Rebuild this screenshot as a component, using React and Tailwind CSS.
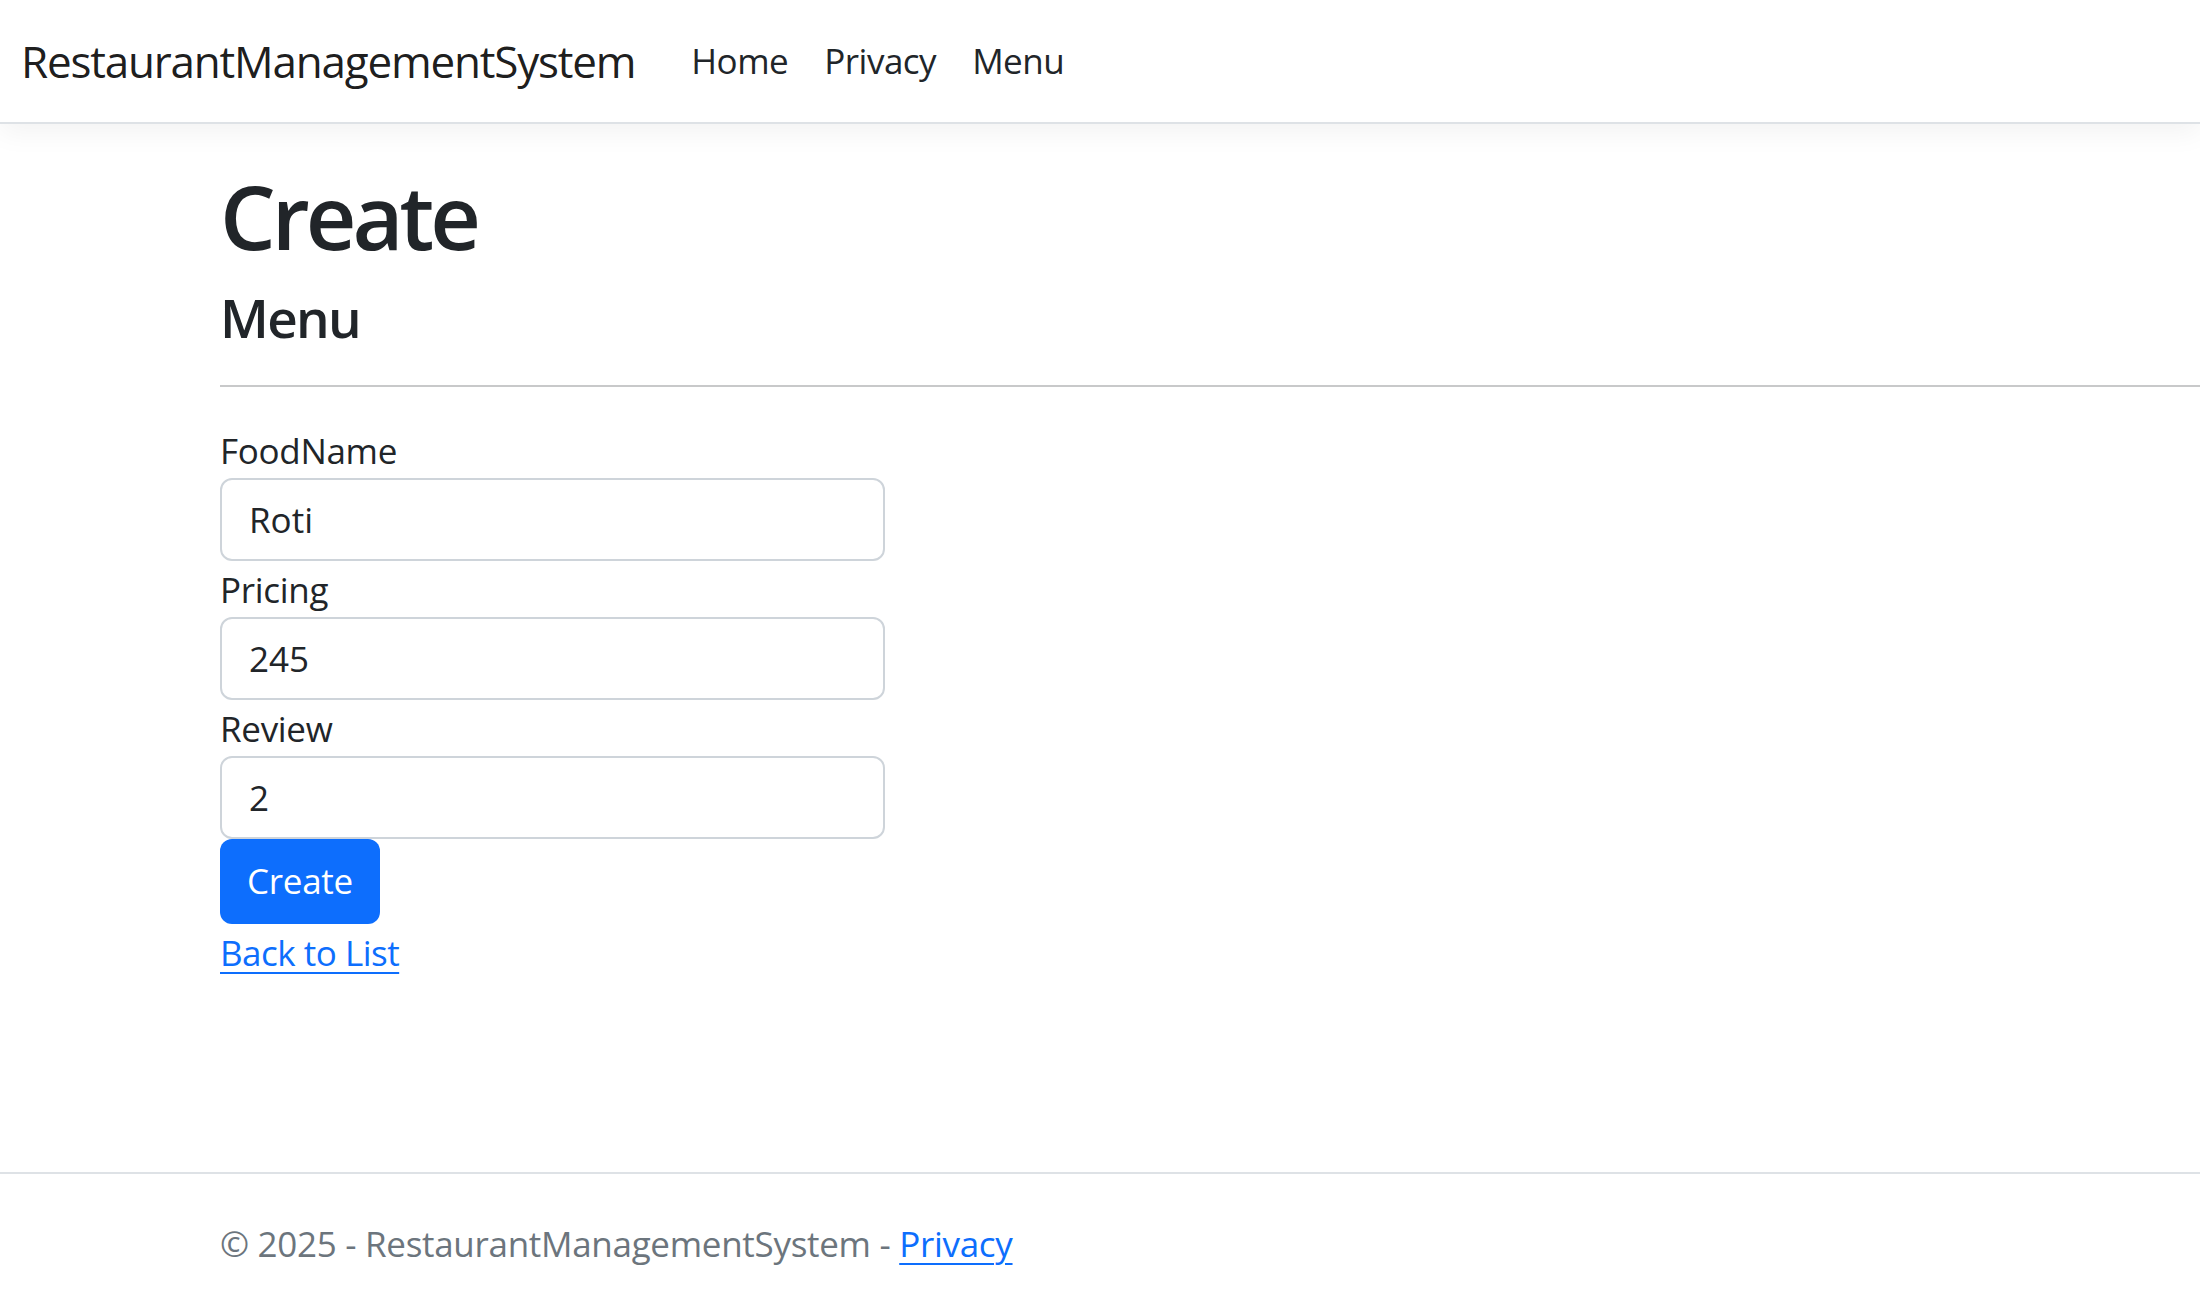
import React from 'react';

function Field({ label, value }) {
  return (
    <div className="mb-[2px]">
      <label className="block text-[35px] leading-[54px] tracking-[-0.3px] text-[#212529]">{label}</label>
      <input
        type="text"
        defaultValue={value}
        className="block w-[665px] h-[83px] px-[27px] text-[35px] text-[#212529] bg-white border-2 border-[#ced4da] rounded-[12px] outline-none"
      />
    </div>
  );
}

export default function App() {
  return (
    <div className="min-h-screen flex flex-col bg-white font-['Open_Sans',sans-serif]">
      {/* Navbar */}
      <header className="h-[124px] bg-white border-b-2 border-[#dee2e6] shadow-[0_9px_26px_rgba(0,0,0,0.05)] relative z-10">
        <nav className="h-full flex items-center pl-[21px]">
          <a href="#" className="text-[44px] tracking-[-1.2px] text-black/90 mr-[38px]">RestaurantManagementSystem</a>
          <ul className="flex">
            <li><a href="#" className="block px-[18px] text-[35px] tracking-[-0.5px] text-[#212529]">Home</a></li>
            <li><a href="#" className="block px-[18px] text-[35px] tracking-[-0.5px] text-[#212529]">Privacy</a></li>
            <li><a href="#" className="block px-[18px] text-[35px] tracking-[-0.5px] text-[#212529]">Menu</a></li>
          </ul>
        </nav>
      </header>

      {/* Page */}
      <main className="flex-1 pl-[220px]">
        <h1 className="mt-[40px] text-[88px] leading-[1.2] tracking-[-4px] font-semibold text-[#212529]">Create</h1>
        <h4 className="mt-[16px] text-[53px] leading-[1.2] tracking-[-1.7px] font-semibold text-[#212529]">Menu</h4>
        <hr className="mt-[36px] border-t-2 border-[#c8c9ca]" />

        <form className="mt-[37px]" onSubmit={(e) => e.preventDefault()}>
          <Field label="FoodName" value="Roti" />
          <Field label="Pricing" value="245" />
          <Field label="Review" value="2" />
          <button
            type="submit"
            className="-mt-[2px] block w-[160px] h-[85px] bg-[#0d6efd] text-white text-[35px] tracking-[-0.3px] rounded-[12px]"
          >
            Create
          </button>
        </form>

        <div className="mt-[2px]">
          <a href="#" className="text-[35px] leading-[53px] tracking-[-0.5px] text-[#0d6efd] underline underline-offset-[6px] decoration-2">Back to List</a>
        </div>
      </main>

      {/* Footer */}
      <footer className="h-[121px] border-t-2 border-[#dee2e6] pl-[220px]">
        <div className="mt-[43px] text-[35px] leading-[53px] tracking-[-0.3px] text-[#6c757d]">
          © 2025 - RestaurantManagementSystem - <a href="#" className="text-[#0d6efd] underline underline-offset-[6px] decoration-2">Privacy</a>
        </div>
      </footer>
    </div>
  );
}
